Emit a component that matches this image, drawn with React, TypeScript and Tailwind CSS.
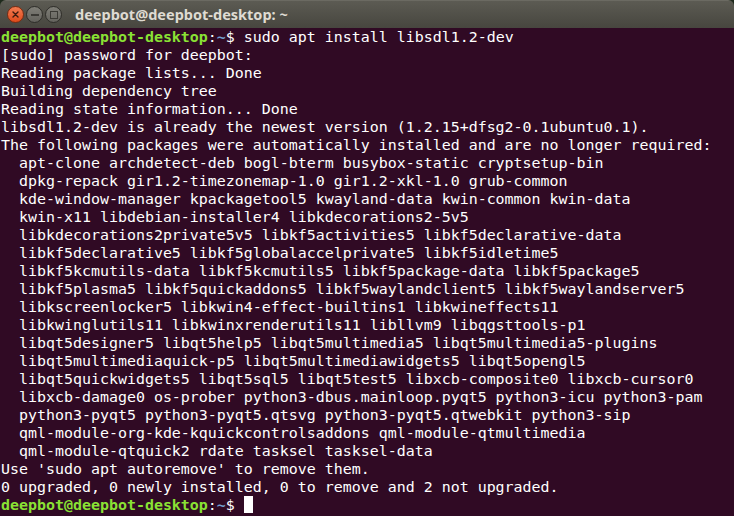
import React from 'react';

// Output lines after the first prompt
const outputLines: string[] = [
  '[sudo] password for deepbot:',
  'Reading package lists... Done',
  'Building dependency tree',
  'Reading state information... Done',
  'libsdl1.2-dev is already the newest version (1.2.15+dfsg2-0.1ubuntu0.1).',
  'The following packages were automatically installed and are no longer required:',
  '  apt-clone archdetect-deb bogl-bterm busybox-static cryptsetup-bin',
  '  dpkg-repack gir1.2-timezonemap-1.0 gir1.2-xkl-1.0 grub-common',
  '  kde-window-manager kpackagetool5 kwayland-data kwin-common kwin-data',
  '  kwin-x11 libdebian-installer4 libkdecorations2-5v5',
  '  libkdecorations2private5v5 libkf5activities5 libkf5declarative-data',
  '  libkf5declarative5 libkf5globalaccelprivate5 libkf5idletime5',
  '  libkf5kcmutils-data libkf5kcmutils5 libkf5package-data libkf5package5',
  '  libkf5plasma5 libkf5quickaddons5 libkf5waylandclient5 libkf5waylandserver5',
  '  libkscreenlocker5 libkwin4-effect-builtins1 libkwineffects11',
  '  libkwinglutils11 libkwinxrenderutils11 libllvm9 libqgsttools-p1',
  '  libqt5designer5 libqt5help5 libqt5multimedia5 libqt5multimedia5-plugins',
  '  libqt5multimediaquick-p5 libqt5multimediawidgets5 libqt5opengl5',
  '  libqt5quickwidgets5 libqt5sql5 libqt5test5 libxcb-composite0 libxcb-cursor0',
  '  libxcb-damage0 os-prober python3-dbus.mainloop.pyqt5 python3-icu python3-pam',
  '  python3-pyqt5 python3-pyqt5.qtsvg python3-pyqt5.qtwebkit python3-sip',
  '  qml-module-org-kde-kquickcontrolsaddons qml-module-qtmultimedia',
  '  qml-module-qtquick2 rdate tasksel tasksel-data',
  "Use 'sudo apt autoremove' to remove them.",
  '0 upgraded, 0 newly installed, 0 to remove and 2 not upgraded.',
];

const Prompt: React.FC<{ children?: React.ReactNode }> = ({ children }) => (
  <div className="h-[18px] leading-[18px] whitespace-pre">
    <span className="font-bold text-[#8ae234]">deepbot@deepbot-desktop</span>
    <span>:</span>
    <span className="font-bold text-[#729fcf]">~</span>
    <span>$ </span>
    {children}
  </div>
);

const WindowButtons = () => (
  <div className="flex items-center gap-[2px] pl-[7px]">
    {/* close */}
    <div className="w-[17px] h-[17px] rounded-full bg-gradient-to-b from-[#f27a4f] to-[#de4a18] border border-[#7a2c12] flex items-center justify-center">
      <svg width="7" height="7" viewBox="0 0 7 7">
        <path d="M1 1 L6 6 M6 1 L1 6" stroke="#3a1a0e" strokeWidth="1.4" strokeLinecap="round" />
      </svg>
    </div>
    {/* minimize */}
    <div className="w-[17px] h-[17px] rounded-full bg-gradient-to-b from-[#7f7e77] to-[#64635d] border border-[#2f2e2a] flex items-center justify-center">
      <div className="w-[8px] h-[2px] bg-[#3b3a35]" />
    </div>
    {/* maximize */}
    <div className="w-[17px] h-[17px] rounded-full bg-gradient-to-b from-[#7f7e77] to-[#64635d] border border-[#2f2e2a] flex items-center justify-center">
      <div className="w-[8px] h-[8px] border-[1.5px] border-[#3b3a35]" />
    </div>
  </div>
);

export default function App() {
  return (
    <div className="w-[734px] h-[516px] overflow-hidden bg-[#1e2a1c]">
      <div className="h-full flex flex-col rounded-t-[6px] overflow-hidden">
        {/* title bar */}
        <div className="h-[28px] shrink-0 flex items-center bg-gradient-to-b from-[#5c5b53] to-[#47463f] border-t border-[#6b6a62]">
          <WindowButtons />
          <span className="ml-[13px] text-[14.5px] font-bold text-[#dfdbd2] font-['Noto_Sans',sans-serif]">
            deepbot@deepbot-desktop: ~
          </span>
        </div>

        {/* terminal */}
        <div className="flex-1 bg-[#300a24] pl-[1px] text-white text-[14.95px] font-['DejaVu_Sans_Mono',monospace]">
          <Prompt>sudo apt install libsdl1.2-dev</Prompt>
          {outputLines.map((line, i) => (
            <div key={i} className="h-[18px] leading-[18px] whitespace-pre">
              {line}
            </div>
          ))}
          <Prompt>
            <span className="inline-block w-[9px] h-[17px] align-top bg-white" />
          </Prompt>
        </div>
      </div>
    </div>
  );
}
